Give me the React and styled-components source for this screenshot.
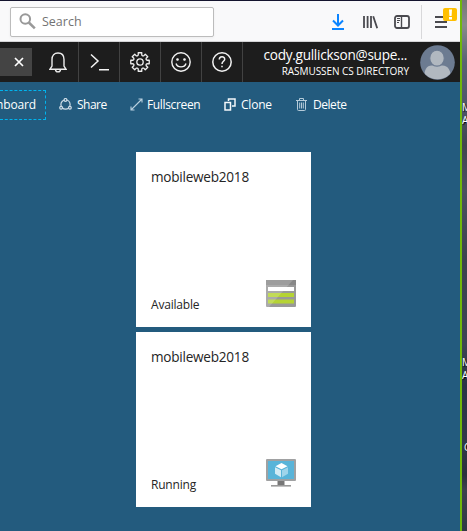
import React from 'react';
import styled, { createGlobalStyle } from 'styled-components';

const Global = createGlobalStyle`
  * { box-sizing: border-box; }
  body { margin: 0; overflow: hidden; font-family: "Open Sans", "Noto Sans", sans-serif; }
  svg { display: block; flex: none; }
`;

const Screen = styled.div`
  display: grid;
  grid-template-columns: 462px 5px;
  width: 467px;
  height: 531px;
  overflow: hidden;
`;
const Window = styled.div`
  display: flex;
  flex-direction: column;
  min-width: 0;
  background: #235b7e;
  border-right: 2px solid #70b80b;
  overflow: hidden;
`;
const Desktop = styled.div`
  display: flex;
  flex-direction: column;
  overflow: hidden;
  background: linear-gradient(180deg, #777 0, #888b8c 25px, #596373 62px, #4c5568 110px, #40454f 145px, #4b5160 190px, #3b434e 260px, #3c4554 345px, #283446 385px, #303949 440px, #29303c 475px, #3c414d 490px, #303844 531px);
`;
const DesktopLabel = styled.div`
  margin-top: ${p => p.$gap}px;
  padding-left: ${p => p.$indent || 0}px;
  color: #fff;
  font-size: 10px;
  line-height: 13px;
  white-space: pre;
  text-shadow: 1px 1px 1px #000;
`;

const BrowserBar = styled.header`
  display: flex;
  flex: none;
  align-items: center;
  height: 42px;
  padding: 1px 0 0 10px;
  background: #f9f9fa;
  border-top: 1px solid #14142e;
  border-bottom: 1px solid #d4d4d6;
`;
const SearchBox = styled.div`
  display: flex;
  align-items: center;
  width: 204px;
  height: 30px;
  padding-left: 8px;
  gap: 6px;
  background: #fff;
  border: 1px solid #bcbcbc;
  border-radius: 2px;
  box-shadow: 0 1px 3px #0000000d;
`;
const Label = styled.span`
  color: ${p => p.$color || '#fff'};
  font-size: ${p => p.$size || 12}px;
  letter-spacing: ${p => p.$spacing || 0}px;
  line-height: ${p => p.$line || 16}px;
  white-space: nowrap;
`;
const BrowserTools = styled.div`
  display: flex;
  align-items: center;
  margin-left: 116px;
  height: 38px;
`;
const ToolIcon = styled.div`
  margin-left: ${p => p.$gap}px;
`;
const Divider = styled.div`
  width: 1px;
  height: 34px;
  margin-left: 11px;
  background: #d8d8da;
`;
const MenuButton = styled.div`
  position: relative;
  margin-left: 13px;
`;
const Alert = styled.div`
  position: absolute;
  left: 8px;
  top: -8px;
  width: 14px;
  height: 13px;
  border-radius: 2px;
  background: #ffbf00;
`;

const PortalBar = styled.div`
  display: flex;
  flex: none;
  align-items: center;
  height: 40px;
  background: #1d1d1d;
`;
const CloseBox = styled.div`
  display: flex;
  align-items: center;
  width: 32px;
  height: 28px;
  padding-left: 14px;
  background: #444;
`;
const PortalButton = styled.div`
  display: flex;
  align-items: center;
  justify-content: center;
  width: ${p => p.$width || 41}px;
  height: 40px;
  padding-left: ${p => p.$shift || 0}px;
  border-right: 1px solid #424242;
`;
const Account = styled.div`
  display: flex;
  flex-direction: column;
  width: 166px;
  align-items: flex-end;
`;
const Email = styled.div`
  display: flex;
  padding: 1px 2px 0 0;
`;
const Avatar = styled.div`
  margin-left: 11px;
`;

const CommandBar = styled.nav`
  display: flex;
  flex: none;
  align-items: center;
  height: 45px;
`;
const DashboardButton = styled.div`
  display: flex;
  align-items: center;
  justify-content: flex-end;
  width: 46px;
  height: 30px;
  padding-right: 9px;
  border: 1px dashed #00b4ee;
  border-left: 0;
`;
const Command = styled.div`
  display: flex;
  align-items: center;
  width: ${p => p.$width}px;
  gap: ${p => p.$gap || 5}px;
`;
const Commands = styled.div`
  display: flex;
  margin-left: 13px;
`;
const Tiles = styled.main`
  display: flex;
  flex-direction: column;
  gap: 5px;
  padding: 25px 0 0 136px;
`;
const Tile = styled.article`
  display: flex;
  flex-direction: column;
  justify-content: space-between;
  width: 175px;
  height: 175px;
  padding: 17px 15px 14px 15px;
  background: #fff;
`;
const TileFooter = styled.div`
  display: flex;
  align-items: flex-end;
  justify-content: space-between;
`;
const TileIcon = styled.div`
  margin-bottom: 6px;
`;

const SearchIcon = () => (
  <svg width="17" height="17" viewBox="0 0 17 17" fill="none" stroke="#999">
    <circle cx="6.3" cy="6" r="4.8" strokeWidth="2" /><path d="M9.8 9.5 15.8 15.3" strokeWidth="2.5" />
  </svg>
);
const DownloadIcon = () => (
  <svg width="12" height="16" viewBox="0 0 12 16" fill="none" stroke="#0a84ff" strokeWidth="2">
    <path d="M6 0v11M1 6.5l5 5 5-5M0 15h12" />
  </svg>
);
const LibraryIcon = () => (
  <svg width="15" height="14" viewBox="0 0 15 14" fill="none" stroke="#4a4a4f" strokeWidth="1.8">
    <path d="M1 1v12M4.6 1v12M8 1v12M10.2 1.2l4 12" />
  </svg>
);
const SidebarIcon = () => (
  <svg width="16" height="14" viewBox="0 0 16 14" fill="none" stroke="#4a4a4f">
    <rect x="1" y="1" width="14" height="12" rx="2" strokeWidth="1.8" />
    <path d="M7.5 1v12" strokeWidth="1.4" /><path d="M3 3.5h3M3 5.5h3M3 7.5h2" />
  </svg>
);
const MenuIcon = () => (
  <svg width="12" height="12" viewBox="0 0 12 12" stroke="#4a4a4f" strokeWidth="1.8">
    <path d="M0 1h12M0 6h12M0 11h12" />
  </svg>
);
const AlertIcon = () => (
  <svg width="14" height="13" viewBox="0 0 14 13" fill="#fff"><path d="M6 1.5h3L8.6 8H6.4zM6 9h3v2.5H6z" /></svg>
);
const CloseIcon = () => (
  <svg width="10" height="10" viewBox="0 0 10 10" stroke="#fff" strokeWidth="1.7"><path d="M1 1l8 8M9 1 1 9" /></svg>
);
const BellIcon = () => (
  <svg width="18" height="21" viewBox="0 0 18 21" fill="none" stroke="#eee" strokeWidth="1.4">
    <path d="M1 17.200 3 14V7.500C3 3.500 5.300 1 9 1s6 2.500 6 6.500V14l2 3.200zM6.500 17.500c0 3.200 5 3.200 5 0" />
  </svg>
);
const ShellIcon = () => (
  <svg width="19" height="18" viewBox="0 0 19 18" fill="none" stroke="#f4f4f4" strokeWidth="1.5">
    <path d="M1 1.500l7 6.500-7 6.500M9 16.700h10" />
  </svg>
);
const teeth = Array.from({ length: 8 }, (_, i) => {
  const at = (r, degrees) => {
    const a = (i * 45 + degrees) * Math.PI / 180;
    return `${(10 + r * Math.cos(a)).toFixed(2)} ${(10 + r * Math.sin(a)).toFixed(2)}`;
  };
  return `${i ? 'L' : 'M'}${at(7.2, -14)}L${at(9.4, -11)}L${at(9.4, 11)}L${at(7.2, 14)}L${at(6.6, 22.5)}`;
}).join('') + 'Z';
const GearIcon = () => (
  <svg width="20" height="20" viewBox="0 0 20 20" fill="none" stroke="#eee" strokeWidth="1.3" strokeLinejoin="round">
    <path d={teeth} /><circle cx="10" cy="10" r="3.2" />
  </svg>
);
const SmileIcon = () => (
  <svg width="20" height="20" viewBox="0 0 20 20" fill="none" stroke="#f2f2f2" strokeWidth="1.4">
    <circle cx="10" cy="10" r="9.2" /><path d="M5 11.500c1.500 4.500 8.500 4.500 10 0" />
    <circle cx="6.5" cy="7.5" r=".65" fill="#fff" /><circle cx="13.5" cy="7.5" r=".65" fill="#fff" />
  </svg>
);
const HelpIcon = () => (
  <svg width="20" height="20" viewBox="0 0 20 20" fill="none" stroke="#f2f2f2" strokeWidth="1.5">
    <circle cx="10" cy="10" r="9.2" /><path d="M7.300 7.500c0-3.500 5.400-3.500 5.400-.3 0 2-2.700 2.300-2.700 4.800M10 13.800v1.500" />
  </svg>
);
const AvatarIcon = () => (
  <svg width="35" height="35" viewBox="0 0 36 36">
    <defs><clipPath id="face"><circle cx="18" cy="18" r="17.3" /></clipPath></defs>
    <circle cx="18" cy="18" r="17.8" fill="#6c7b91" />
    <g clipPath="url(#face)">
      <path d="M4 36c0-11 3-15 8-15h11c6 0 9 5 9 15z" fill="#b1b8c0" />
      <ellipse cx="17.5" cy="13.5" rx="7.5" ry="8.3" fill="#b1b8c0" stroke="#6c7b91" strokeWidth="1.2" />
    </g>
  </svg>
);
const ShareIcon = () => (
  <svg width="13" height="13" viewBox="0 0 13 13" fill="none" stroke="#cfdee8" strokeWidth="1.2">
    <circle cx="6.5" cy="6.5" r="4.6" /><g fill="#235b7e"><circle cx="6.5" cy="1.9" r="1.4" /><circle cx="2.1" cy="9.8" r="1.4" /><circle cx="10.9" cy="9.8" r="1.4" /></g>
  </svg>
);
const FullscreenIcon = () => (
  <svg width="13" height="13" viewBox="0 0 13 13" fill="none" stroke="#b9d0df" strokeWidth="1.1">
    <path d="M1 12 12 1M8.500 1H12v3.500M1 8.500V12h3.500" />
  </svg>
);
const CloneIcon = () => (
  <svg width="12" height="13" viewBox="0 0 12 13" fill="none" stroke="#f4f8fa" strokeWidth="1.5">
    <path d="M1 4.500h5.500V12H1zM4.500 3V1H11v7H8" />
  </svg>
);
const TrashIcon = () => (
  <svg width="11" height="13" viewBox="0 0 11 13" fill="none" stroke="#b5cbd9">
    <path d="M0 2.500h11M3.500 2V.5h4V2M1.500 3v8.500q0 1 1 1h6q1 0 1-1V3M3.700 4.500v6M5.500 4.500v6M7.300 4.500v6" />
  </svg>
);
const WebIcon = () => (
  <svg width="30" height="27" viewBox="0 0 30 27">
    <rect width="30" height="27" rx="1" fill="#999" /><path d="M0 0h30v5H0z" fill="#888" />
    <path d="M2 7h26v4H2z" fill="#fff" /><path d="M2 13h26v4H2zM2 19.500h26v4H2z" fill="#b5d334" />
    <path d="M0 0h27L3 27H0z" fill="#fff" opacity=".18" />
  </svg>
);
const MachineIcon = () => (
  <svg width="30" height="28" viewBox="0 0 30 28">
    <rect width="30" height="22" rx="1" fill="#a0a1a2" /><path d="M2 2h26v18H2z" fill="#59b4d9" />
    <path d="M11.500 22h7v4h-7z" fill="#777" /><path d="M5 26h20v1.600H5z" fill="#999" />
    <path d="m15.500 4 6 3.200-6 3-6-3z" fill="#fff" /><path d="m9 8.200 6 3v7l-6-3.500z" fill="#d2ebf5" /><path d="m22 8.200-6 3v7l6-3.500z" fill="#a0d5eb" />
  </svg>
);

const resources = [
  { name: 'mobileweb2018', status: 'Available', spacing: -0.2, Icon: WebIcon },
  { name: 'mobileweb2018', status: 'Running', spacing: -0.2, Icon: MachineIcon },
];

export default function App() {
  return (
    <>
      <Global />
      <Screen>
        <Window>
          <BrowserBar>
            <SearchBox><SearchIcon /><Label $color="#737373" $size={12.5} $line={18}>Search</Label></SearchBox>
            <BrowserTools>
              <ToolIcon $gap={2}><DownloadIcon /></ToolIcon>
              <ToolIcon $gap={19}><LibraryIcon /></ToolIcon>
              <ToolIcon $gap={16}><SidebarIcon /></ToolIcon>
              <Divider />
              <MenuButton><MenuIcon /><Alert><AlertIcon /></Alert></MenuButton>
            </BrowserTools>
          </BrowserBar>
          <PortalBar>
            <CloseBox><CloseIcon /></CloseBox>
            <PortalButton $width={47} $shift={6}><BellIcon /></PortalButton>
            <PortalButton><ShellIcon /></PortalButton>
            <PortalButton><GearIcon /></PortalButton>
            <PortalButton><SmileIcon /></PortalButton>
            <PortalButton><HelpIcon /></PortalButton>
            <Account>
              <Email><Label $size={13.6} $spacing={-0.27} $line={18}>cody.gullickson@supe...</Label></Email>
              <Label $size={10} $spacing={-0.05} $line={15}>RASMUSSEN CS DIRECTORY</Label>
            </Account>
            <Avatar><AvatarIcon /></Avatar>
          </PortalBar>
          <CommandBar>
            <DashboardButton><Label $spacing={-0.15}>hboard</Label></DashboardButton>
            <Commands>
              <Command $width={71}><ShareIcon /><Label $spacing={-0.5}>Share</Label></Command>
              <Command $width={94} $gap={4}><FullscreenIcon /><Label $spacing={-0.35}>Fullscreen</Label></Command>
              <Command $width={72}><CloneIcon /><Label $spacing={-0.2}>Clone</Label></Command>
              <Command $width={60} $gap={6}><TrashIcon /><Label $spacing={-0.45}>Delete</Label></Command>
            </Commands>
          </CommandBar>
          <Tiles>
            {resources.map(({ name, status, spacing, Icon }) => (
              <Tile key={status}>
                <Label $color="#252525" $size={13.6} $spacing={-0.25}>{name}</Label>
                <TileFooter>
                  <Label $color="#252525" $spacing={spacing}>{status}</Label>
                  <TileIcon><Icon /></TileIcon>
                </TileFooter>
              </Tile>
            ))}
          </Tiles>
        </Window>
        <Desktop>
          <DesktopLabel $gap={101}>M</DesktopLabel>
          <DesktopLabel $gap={0}>A</DesktopLabel>
          <DesktopLabel $gap={229}>M</DesktopLabel>
          <DesktopLabel $gap={0}>A</DesktopLabel>
          <DesktopLabel $gap={59} $indent={2}>C</DesktopLabel>
        </Desktop>
      </Screen>
    </>
  );
}
